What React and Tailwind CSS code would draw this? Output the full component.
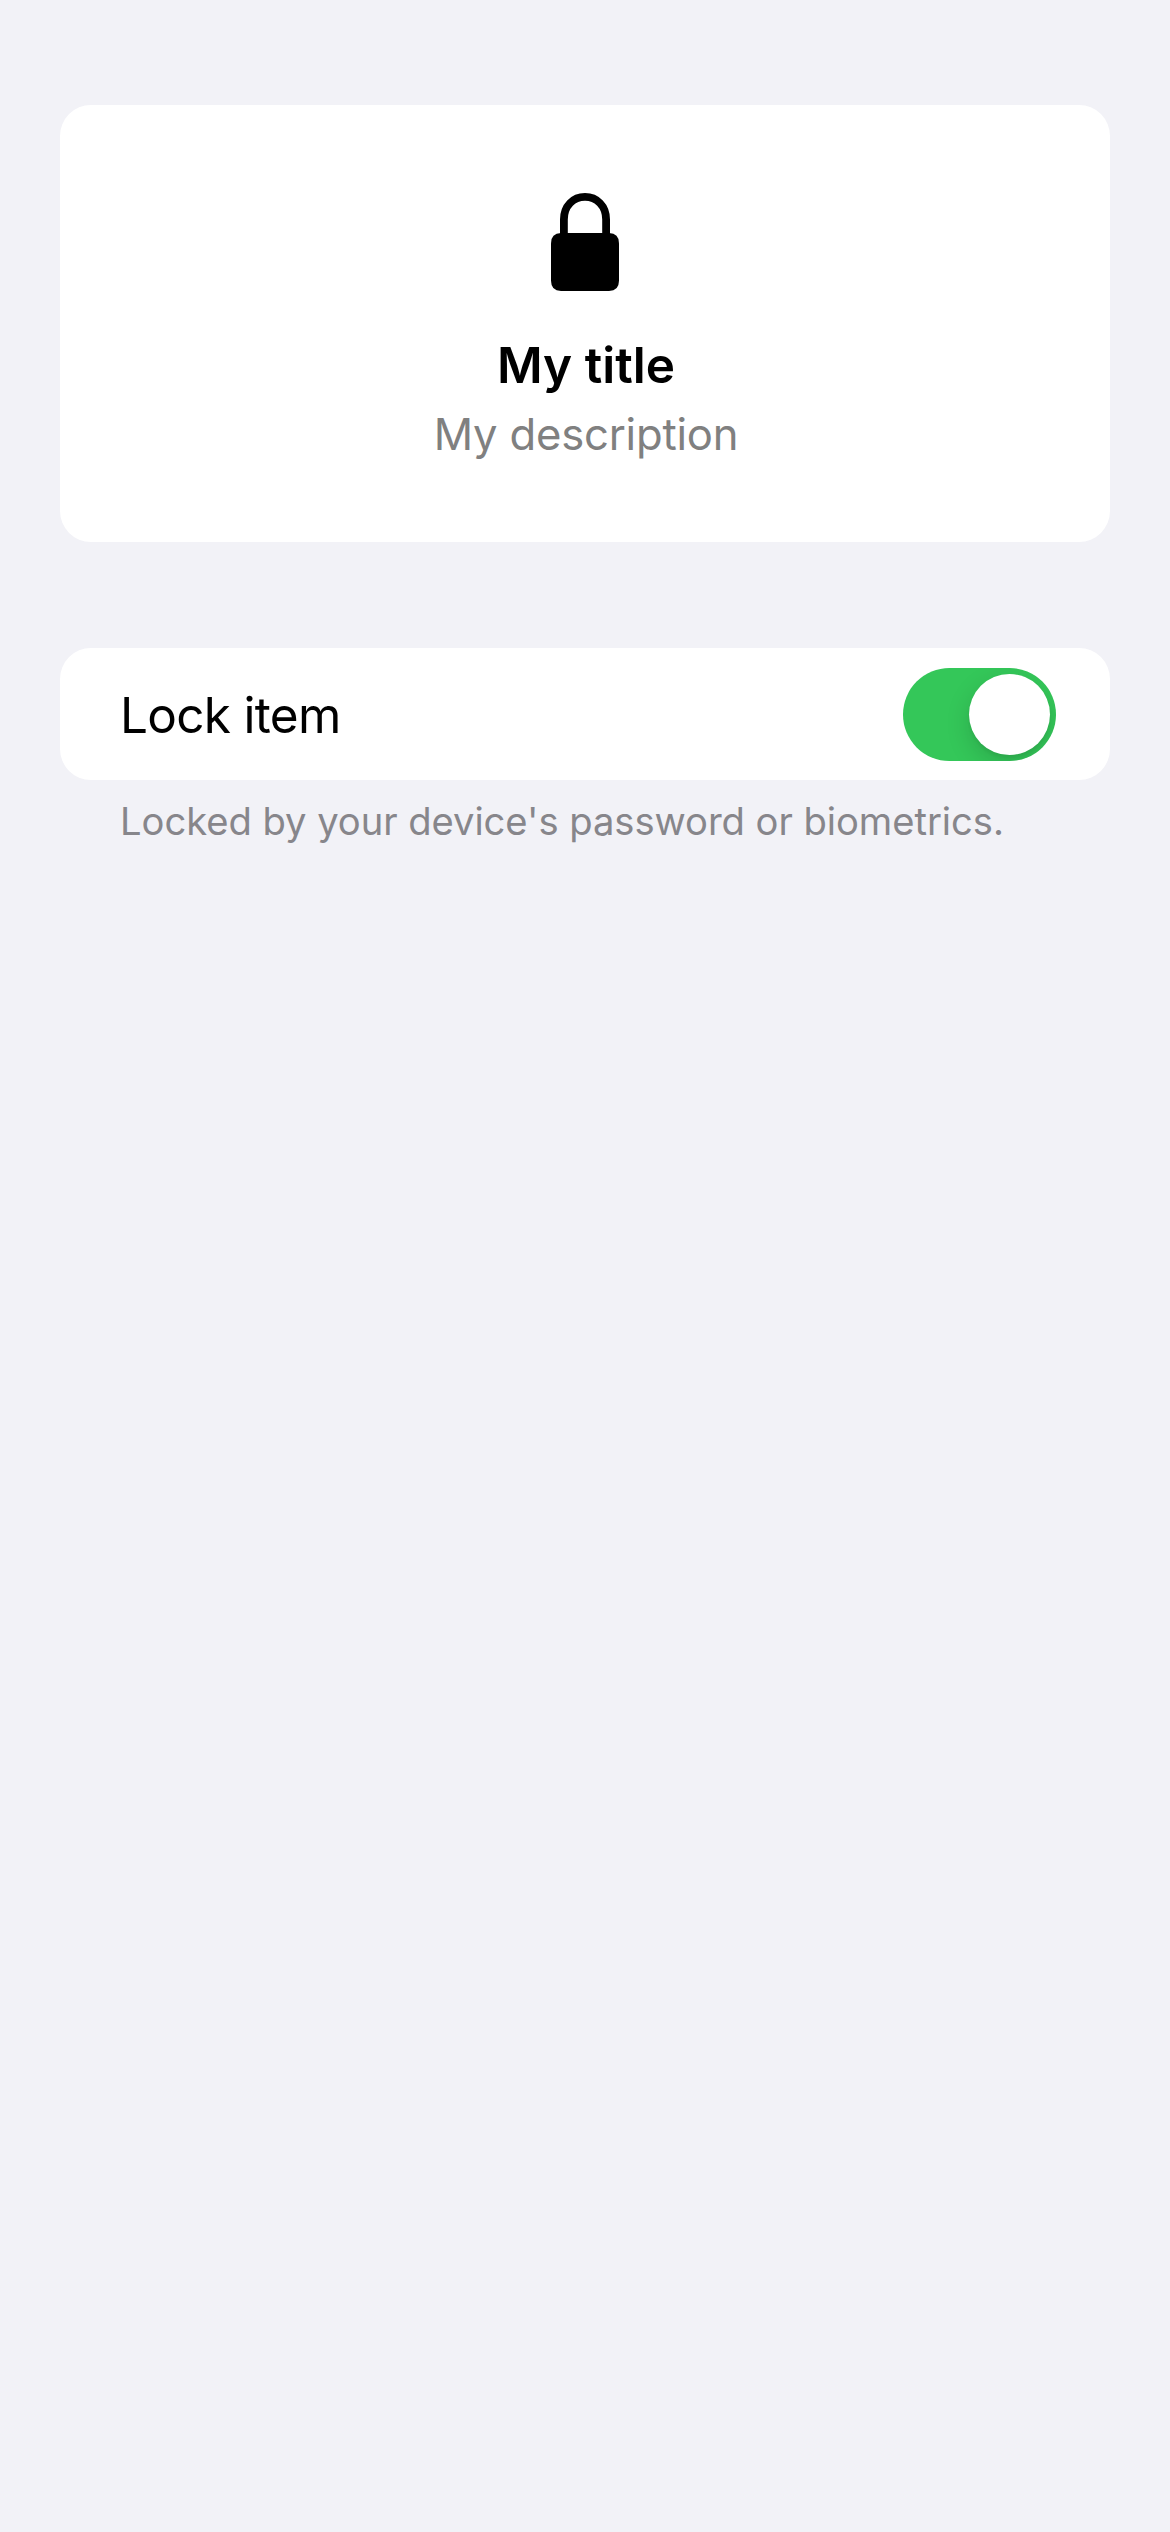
import React, { useState } from 'react';

function LockIcon() {
  return (
    <svg className="h-[98px] w-[68px]" viewBox="0 0 68 98" aria-hidden="true">
      <path
        d="M12.9 45V26.500C12.9 13 22.2 3.9 34 3.9S55.1 13 55.1 26.500V45"
        fill="none"
        stroke="#000"
        strokeWidth="7.8"
      />
      <path
        d="M10 40H58Q68 40 68 50.500V87.500Q68 98 58 98H10Q0 98 0 87.500V50.500Q0 40 10 40Z"
        fill="#000"
      />
    </svg>
  );
}

function Toggle({ checked, onChange }) {
  return (
    <button
      type="button"
      role="switch"
      aria-checked={checked}
      aria-label="Lock item"
      onClick={() => onChange(!checked)}
      className={
        checked
          ? 'flex h-[93px] w-[153px] items-center justify-end overflow-hidden rounded-full bg-[#34c759] px-1.5'
          : 'flex h-[93px] w-[153px] items-center justify-start overflow-hidden rounded-full bg-[#e9e9ea] px-1.5'
      }
    >
      <span className="size-[81px] rounded-full bg-white shadow-[0_9px_24px_rgba(0,0,0,0.15),0_3px_3px_rgba(0,0,0,0.05)]" />
    </button>
  );
}

export default function App() {
  const [locked, setLocked] = useState(true);

  return (
    <main className="flex min-h-screen flex-col bg-[#f2f2f7] px-[60px] pt-[105px] font-['Inter',sans-serif]">
      <section className="flex h-[437px] flex-col items-center rounded-[31px] bg-white pt-[88px]">
        <LockIcon />
        <h1 className="mt-11 pl-0.5 text-[49.5px] leading-[60px] font-semibold text-black">
          My title
        </h1>
        <p className="mt-[13px] pl-0.5 text-[43.6px] leading-[54px] tracking-[-0.2px] text-[#808080]">
          My description
        </p>
      </section>

      <section className="mt-[106px] flex h-[132px] items-center justify-between rounded-[31px] bg-white pr-[54px] pl-[60px]">
        <span className="pt-0.5 text-[49.5px] leading-[60px] tracking-[-0.7px] text-black">
          Lock item
        </span>
        <Toggle checked={locked} onChange={setLocked} />
      </section>
      <p className="mt-[18px] pl-[60px] text-[38.2px] leading-[46px] tracking-[-0.05px] whitespace-nowrap text-[#87868b]">
        Locked by your device's password or biometrics.
      </p>
    </main>
  );
}
